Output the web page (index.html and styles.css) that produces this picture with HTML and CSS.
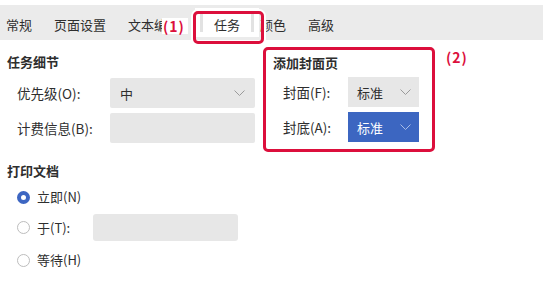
FILE: index.html
```html
<!DOCTYPE html>
<html lang="zh-CN">
<head>
<meta charset="utf-8">
<link rel="stylesheet" href="styles.css">
</head>
<body>
<div class="page">
  <nav class="tabs">
    <span class="tab">常规</span>
    <span class="tab">页面设置</span>
    <span class="tab">文本编辑</span>
    <span class="tab active">任务</span>
    <span class="tab">颜色</span>
    <span class="tab">高级</span>
  </nav>
  <div class="mark mark-tab"></div>
  <div class="callout callout-1">(1)</div>

  <main class="content">
    <section class="left">
      <h3 class="heading">任务细节</h3>
      <div class="rows">
        <div class="row">
          <span class="label">优先级(O):</span>
          <div class="field select">
            <span>中</span>
            <svg class="chev" width="11" height="6" viewBox="0 0 11 6"><polyline points="0.5,0.5 5.5,5.5 10.5,0.5" fill="none" stroke="#9a9a9a" stroke-width="1"/></svg>
          </div>
        </div>
        <div class="row">
          <span class="label">计费信息(B):</span>
          <div class="field"></div>
        </div>
      </div>

      <h3 class="heading heading-print">打印文档</h3>
      <div class="radios">
        <div class="radio-row r1">
          <span class="radio checked"></span>
          <span>立即(N)</span>
        </div>
        <div class="radio-row r2">
          <span class="radio"></span>
          <span class="radio-label">于(T):</span>
          <div class="time-field"></div>
        </div>
        <div class="radio-row r3">
          <span class="radio"></span>
          <span>等待(H)</span>
        </div>
      </div>
    </section>

    <section class="right">
      <div class="cover-group">
        <h3 class="heading">添加封面页</h3>
        <div class="cover-rows">
          <div class="crow">
            <span class="clabel">封面(F):</span>
            <div class="cselect">
              <span>标准</span>
              <svg class="chev" width="11" height="6" viewBox="0 0 11 6"><polyline points="0.5,0.5 5.5,5.5 10.5,0.5" fill="none" stroke="#9a9a9a" stroke-width="1"/></svg>
            </div>
          </div>
          <div class="crow">
            <span class="clabel">封底(A):</span>
            <div class="cselect blue">
              <span>标准</span>
              <svg class="chev" width="11" height="6" viewBox="0 0 11 6"><polyline points="0.5,0.5 5.5,5.5 10.5,0.5" fill="none" stroke="#a9bde6" stroke-width="1"/></svg>
            </div>
          </div>
        </div>
      </div>
      <div class="callout-2">(2)</div>
    </section>
  </main>
</div>
</body>
</html>
```

FILE: styles.css
```css
* { box-sizing: border-box; margin: 0; padding: 0; }
html, body { width: 543px; height: 297px; overflow: hidden; background: #fff; }
body {
  font-family: "Noto Sans CJK SC", "Noto Sans", sans-serif;
  font-size: 13px;
  color: #2e2e2e;
}
.page { position: relative; width: 543px; height: 297px; }

.tabs {
  margin-top: 5px;
  height: 35px;
  background: #ebebeb;
  display: flex;
  gap: 22px;
  padding-left: 6px;
}
.tab {
  display: flex;
  align-items: center;
  padding-top: 5px;
  line-height: 14px;
  white-space: nowrap;
}
.tab.active {
  align-self: flex-start;
  margin-top: 8px;
  height: 19px;
  padding: 5px 11px 0;
  margin-left: -2px;
  margin-right: -16px;
  background: #fff;
  border-left: 3px solid #e2e2e2;
  border-right: 3px solid #e2e2e2;
  box-shadow: 0 0 0 5px #fff;
  align-items: flex-start;
}

.mark-tab {
  position: absolute;
  left: 193px;
  top: 6px;
  width: 71px;
  height: 33px;
  border: 3px solid #dc0f3c;
  border-radius: 5px;
  box-shadow: 0 0 0 2px #fff;
}
.callout {
  position: absolute;
  color: #dc0f3c;
  font-weight: bold;
  font-size: 14px;
  letter-spacing: 1px;
  background: #fff;
  line-height: 16px;
}
.callout-1 { left: 162px; top: 13px; padding: 0 3px 0 1px; }

.content {
  display: flex;
  padding-left: 7px;
}
.heading {
  font-size: 13px;
  font-weight: bold;
  line-height: 18px;
  color: #2e2e2e;
}
.left {
  width: 256px;
  padding-top: 13px;
}
.rows {
  margin-top: 7px;
  display: flex;
  flex-direction: column;
  gap: 5px;
}
.row {
  display: flex;
  align-items: center;
  padding-left: 10px;
}
.label { width: 93px; font-size: 13.5px; }
.field {
  width: 145px;
  height: 30px;
  background: #e7e7e7;
  border-radius: 2px;
}
.select {
  display: flex;
  align-items: center;
  justify-content: space-between;
  padding: 0 10px 0 10px;
}
.heading-print { margin-top: 19px; }
.radios {
  margin-top: 8px;
  padding-left: 10px;
  display: flex;
  flex-direction: column;
}
.radio-row {
  display: flex;
  align-items: center;
  gap: 7px;
  line-height: 18px;
}
.r2 { margin-top: 8px; }
.r3 { margin-top: 10px; }
.radio {
  width: 13px;
  height: 13px;
  border-radius: 50%;
  border: 1px solid #bdbdbd;
  background: #fff;
}
.radio.checked {
  border: 4px solid #3d66c2;
}
.radio-label { width: 49px; }
.time-field {
  width: 145px;
  height: 27px;
  background: #e7e7e7;
  border-radius: 3px;
}

.right {
  display: flex;
  align-items: flex-start;
  margin-top: 7px;
}
.cover-group {
  width: 172px;
  height: 105px;
  border: 3px solid #dc0f3c;
  border-radius: 5px;
  padding: 4px 13px 0 7px;
}
.cover-rows {
  margin-top: 5px;
  display: flex;
  flex-direction: column;
  gap: 5px;
}
.crow {
  display: flex;
  align-items: center;
  padding-left: 10px;
}
.clabel { width: 65px; font-size: 13.5px; }
.cselect {
  width: 71px;
  height: 30px;
  background: #e7e7e7;
  display: flex;
  align-items: center;
  justify-content: space-between;
  padding: 0 8px 0 9px;
}
.cselect.blue {
  background: #3c66c1;
  color: #fff;
}
.callout-2 {
  margin-left: 11px;
  margin-top: 2px;
  color: #dc0f3c;
  font-weight: bold;
  font-size: 14px;
  letter-spacing: 1px;
  line-height: 16px;
}
```
